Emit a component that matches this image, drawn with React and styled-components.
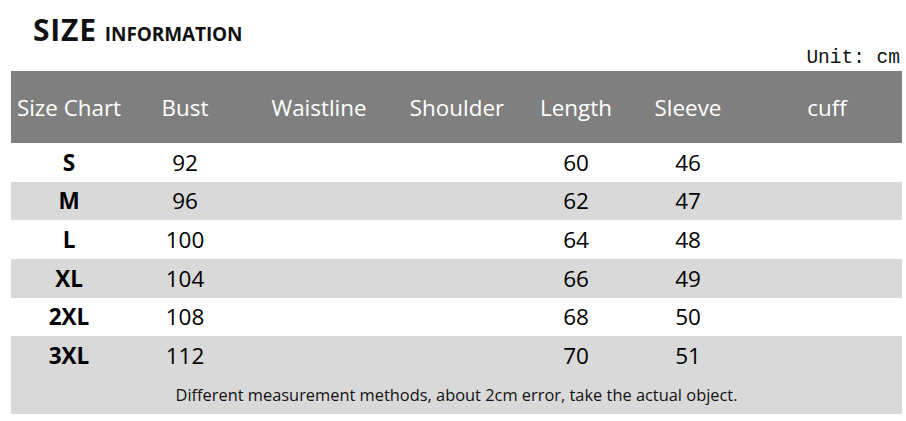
import * as React from "react";
import styled, { createGlobalStyle } from "styled-components";

const GlobalStyle = createGlobalStyle`
  html, body {
    margin: 0;
    padding: 0;
    background: #ffffff;
  }
  body {
    font-family: "Open Sans", "Noto Sans", sans-serif;
    color: #000000;
  }
`;

const COLUMNS = "116px 116px 152px 124px 114px 110px 159px";

const Page = styled.div`
  width: 906px;
  height: 421px;
  display: flex;
  flex-direction: column;
  overflow: hidden;
`;

const TitleRow = styled.div`
  height: 44px;
  display: flex;
  align-items: baseline;
  gap: 8px;
  padding: 15px 0 0 33px;
  box-sizing: border-box;
  font-family: "Open Sans", "Noto Sans", sans-serif;
  font-weight: 700;
  color: #111111;
`;

const TitleMain = styled.span`
  font-size: 30px;
  line-height: 30px;
  letter-spacing: 0.8px;
`;

const TitleSub = styled.span`
  font-size: 19px;
  line-height: 19px;
  letter-spacing: -0.1px;
`;

const UnitRow = styled.div`
  height: 27px;
  box-sizing: border-box;
  display: flex;
  justify-content: flex-end;
  align-items: flex-start;
  padding: 2px 6px 0 0;
  font-family: "Liberation Mono", "DejaVu Sans Mono", monospace;
  font-size: 19.5px;
  line-height: 25px;
  color: #111111;
`;

const Table = styled.div`
  margin-left: 11px;
  width: 891px;
  display: flex;
  flex-direction: column;
`;

const Row = styled.div`
  display: grid;
  grid-template-columns: ${COLUMNS};
  align-items: center;
  height: ${(p) => (p.$head ? "72px" : "38.67px")};
  background: ${(p) => (p.$head ? "#7f7f7f" : p.$shade ? "#d9d9d9" : "#ffffff")};
  color: ${(p) => (p.$head ? "#ffffff" : "#000000")};
`;

const Cell = styled.div`
  text-align: center;
  font-size: ${(p) => (p.$head ? "22.4px" : "22.5px")};
  font-weight: ${(p) => (p.$bold ? 700 : 400)};
  white-space: nowrap;
  padding-left: ${(p) => (p.$last ? "9px" : "0")};
`;

const NoteRow = styled.div`
  height: 38.67px;
  display: flex;
  align-items: center;
  justify-content: center;
  background: #d9d9d9;
  font-size: 16.4px;
  color: #111111;
`;

const headers = ["Size Chart", "Bust", "Waistline", "Shoulder", "Length", "Sleeve", "cuff"];

const rows = [
  ["S", "92", "", "", "60", "46", ""],
  ["M", "96", "", "", "62", "47", ""],
  ["L", "100", "", "", "64", "48", ""],
  ["XL", "104", "", "", "66", "49", ""],
  ["2XL", "108", "", "", "68", "50", ""],
  ["3XL", "112", "", "", "70", "51", ""],
];

const App = () => {
  return (
    <Page>
      <GlobalStyle />
      <TitleRow>
        <TitleMain>SIZE</TitleMain>
        <TitleSub>INFORMATION</TitleSub>
      </TitleRow>
      <UnitRow>Unit: cm</UnitRow>
      <Table>
        <Row $head>
          {headers.map((h, i) => (
            <Cell key={h} $head $last={i === headers.length - 1}>
              {h}
            </Cell>
          ))}
        </Row>
        {rows.map((r, idx) => (
          <Row key={r[0]} $shade={idx % 2 === 1}>
            {r.map((v, i) => (
              <Cell key={i} $bold={i === 0} $last={i === r.length - 1}>
                {v}
              </Cell>
            ))}
          </Row>
        ))}
        <NoteRow>Different measurement methods, about 2cm error, take the actual object.</NoteRow>
      </Table>
    </Page>
  );
};

export default App;
